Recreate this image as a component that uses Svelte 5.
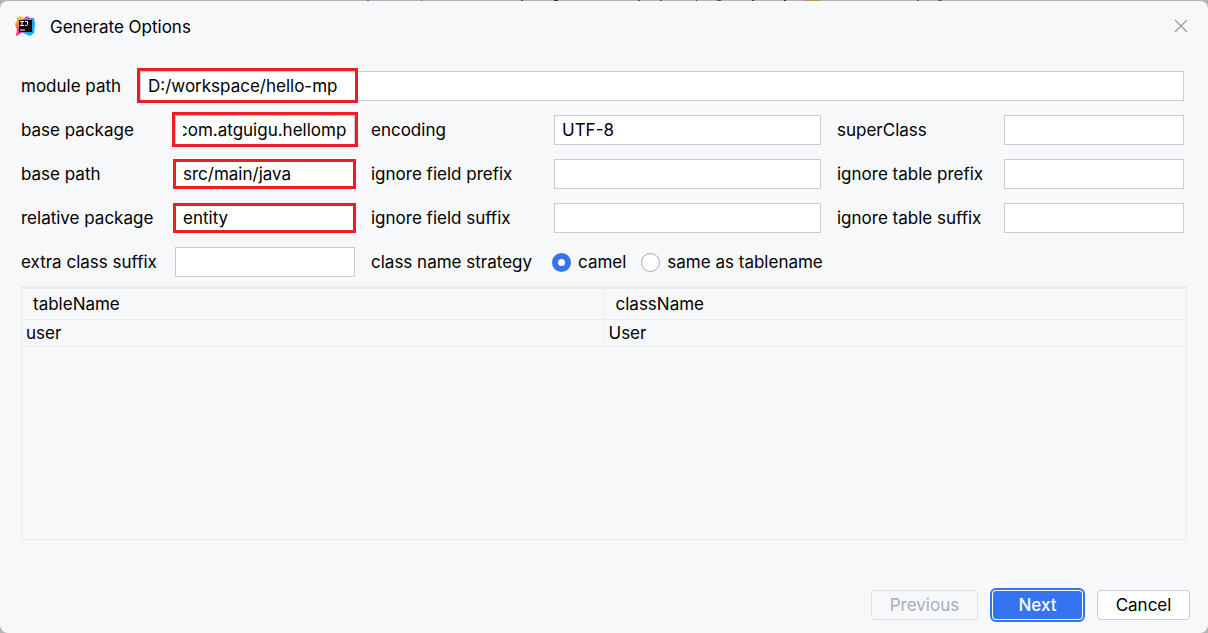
<script>
  let modulePath = $state('D:/workspace/hello-mp');
  let basePackage = $state('com.atguigu.hellomp');
  let basePath = $state('src/main/java');
  let relativePackage = $state('entity');
  let extraSuffix = $state('');
  let encoding = $state('UTF-8');
  let fieldPrefix = $state('');
  let fieldSuffix = $state('');
  let superClass = $state('');
  let tablePrefix = $state('');
  let tableSuffix = $state('');
  let strategy = $state('camel');

  const rows = [{ table: 'user', cls: 'User' }];

  // Slivers of the editor behind the dialog, seen through its top edge.
  const slivers = [
    { x: 367, w: 2, color: '#6a62a8' },
    { x: 421, w: 1, color: '#5560b0' },
    { x: 521, w: 2, color: '#4a4a50' },
    { x: 554, w: 4, color: '#33303a' },
    { x: 638, w: 2, color: '#55555c' },
    { x: 660, w: 2, color: '#55555c' },
    { x: 696, w: 1, color: '#44444a' },
    { x: 717, w: 4, color: '#55555c' },
    { x: 752, w: 2, color: '#44444a' },
    { x: 784, w: 2, color: '#33303a' },
    { x: 804, w: 17, color: '#b8985c' },
    { x: 917, w: 2, color: '#55555c' },
    { x: 938, w: 4, color: '#66666c' }
  ];

  // Shows the end of a value that is wider than its field.
  function scrollToEnd(node) {
    const apply = () => (node.scrollLeft = node.scrollWidth);
    apply();
    requestAnimationFrame(apply);
    document.fonts?.ready.then(apply);
  }
</script>

<main class="dialog">
  <svg class="edge" aria-hidden="true">
    {#each slivers as s}
      <rect x={s.x} y="0" width={s.w} height="1" fill={s.color} />
    {/each}
  </svg>
  <header class="titlebar">
    <svg class="logo" viewBox="0 0 20 20" aria-hidden="true">
      <defs>
        <linearGradient id="warm" x1="0" y1="0" x2="0" y2="1">
          <stop offset="0" stop-color="#ffd04a" />
          <stop offset="0.4" stop-color="#f98a4d" />
          <stop offset="0.7" stop-color="#fb3a78" />
          <stop offset="1" stop-color="#f7318c" />
        </linearGradient>
        <linearGradient id="cool" x1="0" y1="0" x2="1" y2="1">
          <stop offset="0" stop-color="#f0507a" />
          <stop offset="0.3" stop-color="#a35ad8" />
          <stop offset="0.5" stop-color="#14a5fa" />
          <stop offset="0.75" stop-color="#12b5f8" />
          <stop offset="1" stop-color="#0a6ff0" />
        </linearGradient>
      </defs>
      <path d="M2 1 6 0l3 3v13l-3 1-5 3 1-6L0 8l2-3Z" fill="url(#warm)" />
      <path d="m8 3 4-3 3 2h4l1 6-1 9-4 3-7-3Z" fill="url(#cool)" />
      <path d="M3 15h6l-3 2-5 3Z" fill="#fb2f86" />
      <path d="M4 4h13v12H4z" fill="#140508" />
      <path d="M5 5.500h4M7 5.500v4M5 9.500h4M10 5.500h2.500v3q0 1-1 1H10M5 14h5" fill="none" stroke="#fff" stroke-width="1" />
    </svg>
    <h1>Generate Options</h1>
    <button class="close" aria-label="Close">
      <svg viewBox="0 0 14 14" aria-hidden="true"><path d="m1 1 12 12M13 1 1 13" /></svg>
    </button>
  </header>

  <form class="content" onsubmit={(e) => e.preventDefault()}>
    <div class="module">
      <label for="module">module path</label>
      <span class="field wide"><input id="module" type="text" bind:value={modulePath} /></span>
    </div>

    <div class="grid">
      <label for="pkg">base package</label>
      <span class="field marked tall"><input id="pkg" type="text" bind:value={basePackage} use:scrollToEnd /></span>
      <label class="next-col" for="enc">encoding</label>
      <input id="enc" type="text" bind:value={encoding} />
      <label class="next-col" for="super">superClass</label>
      <input id="super" type="text" bind:value={superClass} />

      <label for="path">base path</label>
      <span class="field marked"><input id="path" type="text" bind:value={basePath} /></span>
      <label class="next-col" for="fprefix">ignore field prefix</label>
      <input id="fprefix" type="text" bind:value={fieldPrefix} />
      <label class="next-col" for="tprefix">ignore table prefix</label>
      <input id="tprefix" type="text" bind:value={tablePrefix} />

      <label for="rel">relative package</label>
      <span class="field marked"><input id="rel" type="text" bind:value={relativePackage} /></span>
      <label class="next-col" for="fsuffix">ignore field suffix</label>
      <input id="fsuffix" type="text" bind:value={fieldSuffix} />
      <label class="next-col" for="tsuffix">ignore table suffix</label>
      <input id="tsuffix" type="text" bind:value={tableSuffix} />

      <label for="extra">extra class suffix</label>
      <input id="extra" type="text" bind:value={extraSuffix} />
      <span class="next-col" id="strategy">class name strategy</span>
      <div class="radios" role="radiogroup" aria-labelledby="strategy">
        <label><input type="radio" name="strategy" value="camel" bind:group={strategy} />camel</label>
        <label><input type="radio" name="strategy" value="same" bind:group={strategy} />same as tablename</label>
      </div>
    </div>

    <div class="tablebox">
      <table>
        <thead>
          <tr><th scope="col">tableName</th><th scope="col">className</th></tr>
        </thead>
        <tbody>
          {#each rows as row}
            <tr><td>{row.table}</td><td>{row.cls}</td></tr>
          {/each}
        </tbody>
      </table>
    </div>

    <footer>
      <button type="button" class="back" disabled>Previous</button>
      <button type="submit" class="primary">Next</button>
      <button type="button">Cancel</button>
    </footer>
  </form>
</main>

<style>
  :global(body) {
    background: #b4b4b7;
  }
  .dialog,
  .dialog * {
    box-sizing: border-box;
  }
  .dialog {
    display: flex;
    flex-direction: column;
    min-height: 100vh;
    border-top: 1px solid #b4b4b7;
    border-radius: 8px;
    background: #f7f8fa;
    color: #000;
    font: 17px/20px Inter, sans-serif;
  }
  .edge {
    position: absolute;
    top: 0;
    left: 0;
    width: 100%;
    height: 1px;
  }
  .titlebar {
    display: flex;
    align-items: center;
    height: 50px;
    padding: 0 20px 0 15px;
  }
  .logo {
    width: 20px;
    height: 20px;
  }
  h1 {
    flex: 1;
    margin: 0 0 0 15px;
    padding-top: 2px;
    font: inherit;
  }
  .close {
    display: flex;
    padding: 0;
    border: 0;
    background: none;
  }
  .close svg {
    width: 14px;
    height: 14px;
    fill: none;
    stroke: #98999c;
    stroke-width: 1.2;
  }
  .content {
    display: flex;
    flex: 1;
    flex-direction: column;
    padding: 20px 0 13px;
  }
  .module {
    display: flex;
    align-items: center;
    margin: 0 24px 14px 21px;
  }
  .module label {
    width: 119px;
  }
  .grid {
    display: grid;
    grid-template-columns: 154px 180fr 199px 267fr 183px 180fr;
    row-gap: 14px;
    align-items: center;
    margin: 0 24px 0 21px;
  }
  .next-col {
    padding-left: 16px;
  }
  input[type='text'] {
    display: block;
    width: 100%;
    min-width: 0;
    height: 30px;
    padding: 0 8px 0 7px;
    border: 1px solid #c9ccd6;
    border-radius: 0;
    outline: 0;
    background: #fff;
    color: inherit;
    font: inherit;
  }
  .field {
    position: relative;
    min-width: 0;
  }
  .wide {
    flex: 1;
  }
  .marked::after,
  .wide::after {
    content: '';
    position: absolute;
    inset: 0 -1px 0 -2px;
    border: 3px solid #ee1c25;
    pointer-events: none;
  }
  .tall::after {
    inset: -3px -3px -2px;
  }
  .wide::after {
    inset: -3px auto -2px -3px;
    width: 215px;
  }
  .radios {
    display: flex;
    grid-column: span 3;
    gap: 15px;
    margin-left: -2px;
  }
  .radios label {
    display: flex;
    align-items: center;
    gap: 7px;
  }
  input[type='radio'] {
    appearance: none;
    width: 19px;
    height: 19px;
    margin: 0;
    border: 1px solid #a8adbd;
    border-radius: 50%;
    background: #fff;
  }
  input[type='radio']:checked {
    border: 6px solid #3574f0;
  }
  .tablebox {
    flex: 1;
    margin: 9px 21px 0;
    border: 1px solid #ebecf0;
    border-top-width: 3px;
  }
  table {
    width: 100%;
    border-collapse: collapse;
    table-layout: fixed;
  }
  th,
  td {
    border-bottom: 1px solid #ebecf0;
    font-weight: 400;
    text-align: left;
  }
  th {
    height: 30px;
    padding: 0 11px;
  }
  td {
    height: 27px;
    padding: 0 4px;
  }
  th + th,
  td + td {
    border-left: 1px solid #ebecf0;
  }
  footer {
    display: flex;
    justify-content: flex-end;
    gap: 14px;
    margin: 50px 18px 0;
  }
  footer button {
    min-width: 93px;
    height: 30px;
    padding: 0 16px;
    border: 1px solid #c9ccd6;
    border-radius: 4px;
    background: #fff;
    color: #000;
    font: inherit;
  }
  footer .back {
    min-width: 107px;
  }
  footer button:disabled {
    border-color: #dfe1e5;
    background: none;
    color: #a8adbd;
  }
  footer .primary {
    min-width: 91px;
    border-color: #fff;
    outline: 2px solid #3574f0;
    background: #3574f0;
    color: #fff;
    font-weight: 500;
  }
</style>
